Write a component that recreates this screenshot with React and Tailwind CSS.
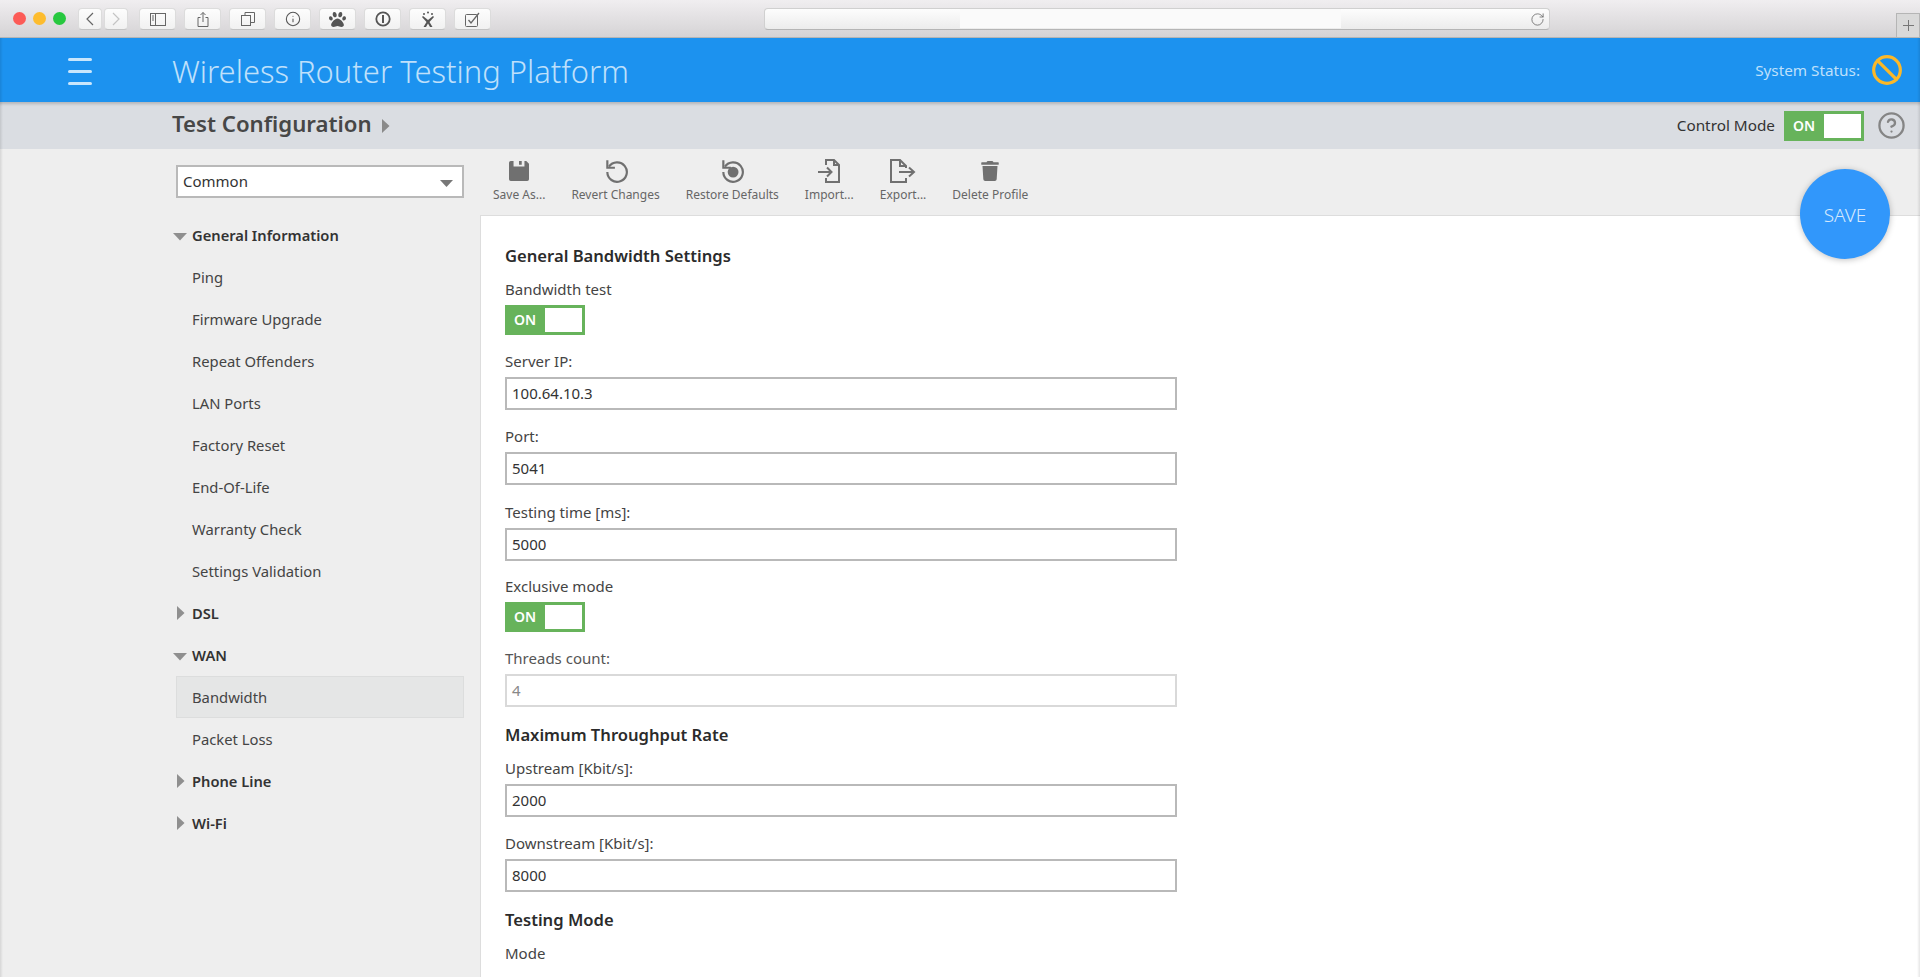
import React from 'react';
import { Ban, CircleHelp, Info, RotateCw } from 'lucide-react';
import { FaPaw, FaTrash } from 'react-icons/fa';

const ChromeButton = ({ className = 'w-[37px]', children }) => (
  <div className={`flex h-[22px] items-center justify-center rounded-[4px] border border-[#dcdcdc] border-b-[#c4c4c4] bg-gradient-to-b from-[#fdfdfd] to-[#f1f1f1] text-[#666] ${className}`}>
    {children}
  </div>
);

const Triangle = ({ open }) =>
  open ? (
    <svg width="14" height="8" viewBox="0 0 14 8" className="absolute left-[-3px] top-[19px]">
      <path d="M0 0h14L7 7.5z" fill="#8f8f8f" />
    </svg>
  ) : (
    <svg width="8" height="14" viewBox="0 0 8 14" className="absolute left-[1px] top-[14px]">
      <path d="M0 0l7.5 7L0 14z" fill="#8f8f8f" />
    </svg>
  );

const SideGroup = ({ label, open }) => (
  <div className="relative flex h-[42px] items-center pl-4 text-[14.7px] font-semibold text-[#333]">
    <Triangle open={open} />
    {label}
  </div>
);

const SideItem = ({ label, active }) => (
  <div className={`flex h-[42px] items-center pl-4 text-[14.8px] text-[#444] ${active ? 'border border-[#dcdddd] bg-[#e5e6e6] pl-[15px]' : ''}`}>
    {label}
  </div>
);

const Toggle = ({ className = '' }) => (
  <div className={`flex h-[30px] w-20 items-center border-[3px] border-[#67b35b] bg-[#67b35b] ${className}`}>
    <span className="w-[37px] pl-[6px] text-[14px] font-semibold leading-none text-white">ON</span>
    <span className="h-full flex-1 bg-white" />
  </div>
);

const Field = ({ label, value, disabled, className = 'mt-[15px]' }) => (
  <div className={className}>
    <div className={`h-6 leading-6 ${disabled ? 'text-[#555]' : 'text-[#444]'}`}>{label}</div>
    <div className={`mt-[4px] flex h-[33px] w-[672px] items-center border-2 bg-white pl-[5px] ${disabled ? 'border-[#d9d9d9] text-[#888]' : 'border-[#b9b9b9] text-[#333]'}`}>
      {value}
    </div>
  </div>
);

const SectionTitle = ({ children, className }) => (
  <div className={`h-6 text-[16.6px] font-semibold leading-[24px] text-[#2b2b2b] ${className}`}>{children}</div>
);

const ToolButton = ({ label, icon }) => (
  <div className="flex flex-col items-center text-[12px] leading-[18px] text-[#666]">
    <div className="flex h-[26px] items-center justify-center">{icon}</div>
    <span className="mt-[2px] whitespace-nowrap">{label}</span>
  </div>
);

export default function App() {
  const stroke = { fill: 'none', stroke: '#707070', strokeWidth: 2 };

  return (
    <div className="relative flex h-[977px] flex-col overflow-hidden bg-[#eeeeee] text-[15px] font-['Noto_Sans','Open_Sans',sans-serif]">
      {/* Browser chrome */}
      <div className="flex h-[38px] shrink-0 items-start border-b border-[#b5b5b5] bg-gradient-to-b from-[#f0eef0] to-[#d5d3d5] pt-2">
        <div className="ml-[13px] mt-[4px] flex gap-[7px]">
          <span className="h-[13px] w-[13px] rounded-full bg-[#fc5b57]" />
          <span className="h-[13px] w-[13px] rounded-full bg-[#fdbc2e]" />
          <span className="h-[13px] w-[13px] rounded-full bg-[#27c83f]" />
        </div>
        <div className="ml-[12px] flex gap-[2px]">
          <ChromeButton className="w-6">
            <svg width="10" height="14" viewBox="0 0 10 14" fill="none" stroke="#666" strokeWidth="1.2"><path d="M8 1L2 7l6 6" /></svg>
          </ChromeButton>
          <ChromeButton className="w-6">
            <svg width="10" height="14" viewBox="0 0 10 14" fill="none" stroke="#c4c4c4" strokeWidth="1.2"><path d="M2 1l6 6-6 6" /></svg>
          </ChromeButton>
        </div>
        <div className="ml-[11px] flex gap-2">
          <ChromeButton>
            <svg width="16" height="13" viewBox="0 0 16 13" fill="none" stroke="#666"><rect x=".5" y=".5" width="15" height="12" /><path d="M5.5 .5v12M2 3h2M2 5h2M2 7h2" /></svg>
          </ChromeButton>
          <ChromeButton>
            <svg width="12" height="17" viewBox="0 0 12 16" fill="none" stroke="#666"><path d="M3.500 6H1v9h10V6H8.500M6 10.500V1M3.500 3.500L6 1l2.500 2.500" /></svg>
          </ChromeButton>
          <ChromeButton>
            <svg width="14" height="14" viewBox="0 0 14 14" fill="none" stroke="#666"><rect x=".5" y="3.500" width="9" height="10" /><path d="M4 3.500V.5h9.500v10h-4" /></svg>
          </ChromeButton>
          <ChromeButton>
            <Info size={16} strokeWidth={1.600} color="#555" />
          </ChromeButton>
          <ChromeButton>
            <FaPaw size={17} color="#555" />
          </ChromeButton>
          <ChromeButton>
            <svg width="16" height="16" viewBox="0 0 16 16"><circle cx="8" cy="8" r="6.700" fill="none" stroke="#555" strokeWidth="1.800" /><rect x="7" y="4" width="2" height="8" fill="#555" /></svg>
          </ChromeButton>
          <ChromeButton>
            <svg width="14" height="17" viewBox="0 0 14 17" fill="#555"><circle cx="7" cy="1.500" r="1" /><circle cx="3" cy="3" r="1" /><circle cx="11" cy="3" r="1" /><path d="M2 5l5 4 5-4 1 1-4.500 5 3 5H9L7 12.500 5 16H2.500l3-5L1 6z" /></svg>
          </ChromeButton>
          <ChromeButton>
            <svg width="15" height="15" viewBox="0 0 15 15" fill="none" stroke="#666"><rect x=".5" y="2.500" width="12" height="12" rx="1" /><path d="M3.500 8l2.500 3L14 1" strokeWidth="1.300" /></svg>
          </ChromeButton>
        </div>
        <div className="ml-[273px] flex h-[22px] w-[786px] items-center rounded-[4px] border border-[#d0d0d0] border-b-[#b5b5b5] bg-gradient-to-b from-[#fdfdfd] to-[#ececec]">
          <div className="ml-[195px] h-[19px] w-[381px] self-start bg-[#fafafa]" />
          <RotateCw size={15} strokeWidth={1.300} color="#666" className="ml-auto mr-[4px]" />
        </div>
        <div className="ml-auto mt-[5px] flex h-6 w-6 items-center justify-center border border-b-0 border-[#b5b5b5] bg-[#d9d9d9] text-[#777]">
          <svg width="11" height="11" viewBox="0 0 11 11" stroke="#777"><path d="M5.500 0v11M0 5.500h11" /></svg>
        </div>
      </div>

      {/* App header */}
      <div className="flex h-16 shrink-0 items-center bg-[#1c92ef] text-[#bfe0fb]">
        <div className="ml-[68px] mt-[2px] flex w-6 flex-col gap-[9px]">
          <span className="h-[3px] rounded-full bg-[#c9e6fc]" />
          <span className="h-[3px] rounded-full bg-[#c9e6fc]" />
          <span className="h-[3px] rounded-full bg-[#c9e6fc]" />
        </div>
        <div className="ml-[80px] mt-[2px] text-[30.95px] font-light leading-none">Wireless Router Testing Platform</div>
        <div className="ml-auto text-[15.3px]">System Status:</div>
        <Ban size={32} strokeWidth={2.400} color="#fbb829" className="ml-[11px] mr-[17px]" />
      </div>

      {/* Section bar */}
      <div className="flex h-[47px] shrink-0 items-center bg-[#dadde2] shadow-[inset_0_4px_3px_-2px_rgba(0,0,0,0.18)]">
        <div className="mb-[3px] ml-[172px] text-[22.2px] font-semibold leading-none text-[#474747]">Test Configuration</div>
        <svg width="8" height="14" viewBox="0 0 8 14" className="ml-[10px]"><path d="M0 0l7.500 7L0 14z" fill="#8a8a8a" /></svg>
        <div className="mb-[1px] ml-auto text-[15.3px] text-[#333]">Control Mode</div>
        <Toggle className="ml-[9px]" />
        <CircleHelp size={29} strokeWidth={1.900} color="#858585" className="ml-[13px] mr-[14px]" />
      </div>

      {/* Content */}
      <div className="flex min-h-0 flex-1">
        <div className="w-[480px] shrink-0 pl-[176px] pr-4 pt-4">
          <div className="flex h-[33px] w-[288px] items-center justify-between border-2 border-[#b9b9b9] bg-white pl-[5px] pr-[9px] text-[#333]">
            Common
            <svg width="13" height="7" viewBox="0 0 13 7" className="mt-[3px]"><path d="M0 0h13L6.500 7z" fill="#777" /></svg>
          </div>
          <div className="mt-4">
            <SideGroup label="General Information" open />
            <SideItem label="Ping" />
            <SideItem label="Firmware Upgrade" />
            <SideItem label="Repeat Offenders" />
            <SideItem label="LAN Ports" />
            <SideItem label="Factory Reset" />
            <SideItem label="End-Of-Life" />
            <SideItem label="Warranty Check" />
            <SideItem label="Settings Validation" />
            <SideGroup label="DSL" />
            <SideGroup label="WAN" open />
            <SideItem label="Bandwidth" active />
            <SideItem label="Packet Loss" />
            <SideGroup label="Phone Line" />
            <SideGroup label="Wi-Fi" />
          </div>
        </div>

        <div className="flex min-w-0 flex-1 flex-col">
          <div className="flex h-[66px] shrink-0 items-start gap-[26px] pl-[13px] pt-[9px]">
            <ToolButton
              label="Save As..."
              icon={
                <svg width="20" height="20" viewBox="0 0 22 22"><path fillRule="evenodd" d="M2 0h3v6h12V0h2l3 3v17a2 2 0 0 1-2 2H2a2 2 0 0 1-2-2V2a2 2 0 0 1 2-2zM11 0h3v4h-3z" fill="#707070" /></svg>
              }
            />
            <ToolButton
              label="Revert Changes"
              icon={
                <svg width="26" height="26" viewBox="0 0 24 24" {...stroke}><path d="M5.500 8A9 9 0 1 1 4 13" /><path d="M4 2v7h7" /></svg>
              }
            />
            <ToolButton
              label="Restore Defaults"
              icon={
                <svg width="26" height="26" viewBox="0 0 24 24"><path d="M5.500 8A9 9 0 1 1 4 13" {...stroke} /><path d="M4 2v7h7" {...stroke} /><circle cx="13" cy="13" r="5" fill="#707070" /></svg>
              }
            />
            <ToolButton
              label="Import..."
              icon={
                <svg width="24" height="24" viewBox="0 0 24 24" {...stroke}><path d="M9 6V1h8l5 5v17H9v-4M17 1v5h5M1 13h13M10 8.500l4.500 4.500-4.500 4.500" /></svg>
              }
            />
            <ToolButton
              label="Export..."
              icon={
                <svg width="26" height="24" viewBox="0 0 26 24" {...stroke}><path d="M16 19v4H1V1h9l6 6v2M10 1v6h6M9 13h15M19 8.500l5 4.500-5 4.500" /></svg>
              }
            />
            <ToolButton label="Delete Profile" icon={<FaTrash size={20} color="#707070" />} />
          </div>

          <div className="min-h-0 flex-1 border-l border-t border-[#dddddd] bg-white pl-6 pt-[28px]">
            <SectionTitle>General Bandwidth Settings</SectionTitle>
            <div className="mt-[9px] h-6 leading-6 text-[#444]">Bandwidth test</div>
            <Toggle className="mt-[4px]" />
            <Field label="Server IP:" value="100.64.10.3" className="mt-[14px]" />
            <Field label="Port:" value="5041" className="mt-[14px]" />
            <Field label="Testing time [ms]:" value="5000" />
            <div className="mt-[13px] h-6 leading-6 text-[#444]">Exclusive mode</div>
            <Toggle className="mt-[4px]" />
            <Field label="Threads count:" value="4" disabled className="mt-[14px]" />
            <SectionTitle className="mt-4">Maximum Throughput Rate</SectionTitle>
            <Field label="Upstream [Kbit/s]:" value="2000" className="mt-[9px]" />
            <Field label="Downstream [Kbit/s]:" value="8000" className="mt-[14px]" />
            <SectionTitle className="mt-4">Testing Mode</SectionTitle>
            <div className="mt-[9px] h-6 leading-6 text-[#444]">Mode</div>
          </div>
        </div>
      </div>

      {/* Floating save */}
      <button className="absolute left-[1800px] top-[169px] flex h-[90px] w-[90px] items-center justify-center rounded-full bg-[#3197fb] pt-[3px] text-[19px] font-light text-[#d5e9fd] shadow-[0_1px_6px_rgba(0,0,0,0.25)]">
        SAVE
      </button>

      {/* Window edge shadows */}
      <div className="absolute bottom-0 left-0 top-[38px] w-[3px] bg-gradient-to-r from-black/10 to-transparent" />
      <div className="absolute bottom-0 right-0 top-[38px] w-[3px] bg-gradient-to-l from-black/10 to-transparent" />
    </div>
  );
}
